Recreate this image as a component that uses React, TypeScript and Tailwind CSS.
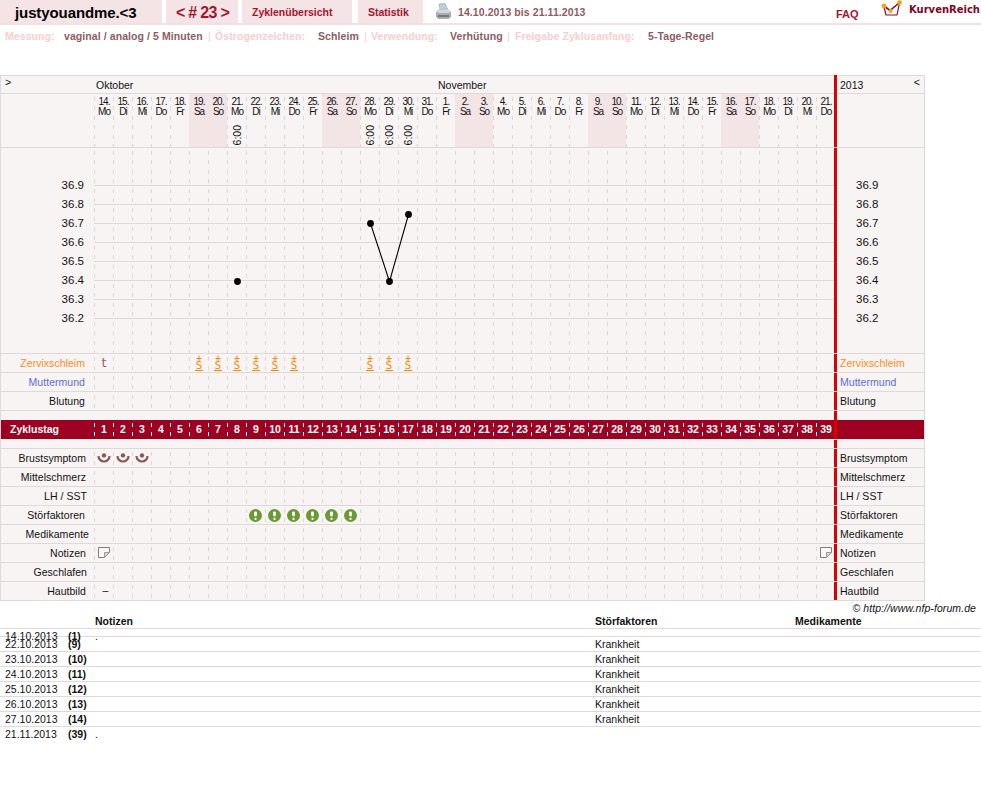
const days: [number, string][] = [
  [14, "Mo"], [15, "Di"], [16, "Mi"], [17, "Do"], [18, "Fr"], [19, "Sa"], [20, "So"],
  [21, "Mo"], [22, "Di"], [23, "Mi"], [24, "Do"], [25, "Fr"], [26, "Sa"], [27, "So"],
  [28, "Mo"], [29, "Di"], [30, "Mi"], [31, "Do"], [1, "Fr"], [2, "Sa"], [3, "So"],
  [4, "Mo"], [5, "Di"], [6, "Mi"], [7, "Do"], [8, "Fr"], [9, "Sa"], [10, "So"],
  [11, "Mo"], [12, "Di"], [13, "Mi"], [14, "Do"], [15, "Fr"], [16, "Sa"], [17, "So"],
  [18, "Mo"], [19, "Di"], [20, "Mi"], [21, "Do"],
];

const dash =
  "bg-[linear-gradient(to_bottom,transparent_3px,#dcd8d8_3px,#dcd8d8_7px,transparent_7px,transparent_12px,#dcd8d8_12px,#dcd8d8_16px,transparent_16px)] bg-[length:1px_19px] bg-repeat-y";
const dashWhite =
  "bg-[linear-gradient(to_bottom,transparent_3px,#ffffff_3px,#ffffff_7px,transparent_7px,transparent_12px,#ffffff_12px,#ffffff_16px,transparent_16px)] bg-[length:1px_19px] bg-repeat-y";

const line = "border-[#dedada]";

function Cells({ render, white }: { render?: (i: number) => React.ReactNode; white?: boolean }) {
  return (
    <div className="flex w-[740px] shrink-0 overflow-hidden">
      {days.map((_, i) => (
        <div key={i} className={`w-[19px] shrink-0 flex items-center justify-center pl-px ${white ? dashWhite : dash}`}>
          {render?.(i)}
        </div>
      ))}
    </div>
  );
}

function Row({
  label,
  pr = 9,
  color = "text-[#111]",
  render,
}: {
  label: string;
  pr?: number;
  color?: string;
  render?: (i: number) => React.ReactNode;
}) {
  return (
    <div className={`flex h-[19px] border-t ${line}`}>
      <div className={`w-[94px] shrink-0 border-l ${line} text-right leading-[18px] tracking-[0.04px] ${color}`} style={{ paddingRight: pr }}>
        {label}
      </div>
      <Cells render={render} />
      <div className="w-[3px] shrink-0 bg-[#dd0000]" />
      <div className={`w-[88px] shrink-0 border-r ${line} pl-[3px] leading-[18px] tracking-[0.04px] ${color}`}>{label}</div>
    </div>
  );
}

function Schleim() {
  return (
    <div className="flex flex-col items-center font-['DejaVu_Sans',sans-serif] text-[#ff8800]">
      <span className="h-[6px] text-[8px] font-bold leading-[6px]">+</span>
      <span className="w-[8px] border-b border-[#ff8800] text-center text-[10px] leading-[8px]">S</span>
    </div>
  );
}

function Brust() {
  return (
    <svg width="14" height="12" viewBox="0 0 14 12">
      <circle cx="7" cy="3.4" r="2.2" fill="#8a5a5a" />
      <path d="M1.5 4 A5.5 5.5 0 0 0 12.5 4" fill="none" stroke="#8a5a5a" strokeWidth="2.2" />
    </svg>
  );
}

function Stoer() {
  return (
    <svg width="13" height="13" viewBox="0 0 13 13" className="-translate-x-px">
      <circle cx="6.5" cy="6.5" r="6.5" fill="#6b9a34" />
      <rect x="5" y="2.5" width="3" height="5" rx="1.4" fill="#fff" />
      <rect x="5.5" y="8.8" width="2" height="2" fill="#fff" />
    </svg>
  );
}

function Note() {
  return (
    <svg width="12" height="11" viewBox="0 0 12 11" className="-translate-y-px">
      <path d="M0.5 0.5 H11.5 V5.5 L6.5 10.5 H0.5 Z" fill="#fbf8f8" stroke="#807c7c" />
      <path d="M11.5 5.5 H6.5 V10.5 Z" fill="#d8d4d4" stroke="#999" />
    </svg>
  );
}

function Printer() {
  return (
    <svg width="17" height="17" viewBox="0 0 17 17">
      <path d="M4 1 L10 0.5 L12.5 6 L5 6.5 Z" fill="#bcd0dc" stroke="#8ea3ae" strokeWidth="0.6" />
      <path d="M1 9 L3.5 6.5 H13.5 L16 9 V14 L13.5 16 H3.5 L1 14 Z" fill="#a9adb1" />
      <path d="M1 9 L3.5 6.5 H13.5 L16 9 L13 10 H4 Z" fill="#d4d7da" />
      <rect x="3" y="12" width="11" height="2" fill="#75797d" />
    </svg>
  );
}

function Logo() {
  return (
    <svg width="22" height="19" viewBox="0 0 22 19">
      <path d="M3 7 L5 15 H16 L18.5 3" fill="#fff" stroke="#8b0b2a" strokeWidth="1.2" />
      <path d="M3 6 L9 10.5 L18 3" fill="none" stroke="#8b0b2a" strokeWidth="1.6" />
      <circle cx="3" cy="6" r="2.4" fill="#f6a21c" />
      <circle cx="9.5" cy="11" r="2" fill="#f6a21c" />
      <circle cx="18.5" cy="2.6" r="2.4" fill="#f6a21c" />
    </svg>
  );
}

const temps = ["36.9", "36.8", "36.7", "36.6", "36.5", "36.4", "36.3", "36.2"];

const notes: [string, string, string, string][] = [
  ["22.10.2013", "(9)", "", "Krankheit"],
  ["23.10.2013", "(10)", "", "Krankheit"],
  ["24.10.2013", "(11)", "", "Krankheit"],
  ["25.10.2013", "(12)", "", "Krankheit"],
  ["26.10.2013", "(13)", "", "Krankheit"],
  ["27.10.2013", "(14)", "", "Krankheit"],
];

export default function App() {
  return (
    <div className="h-[800px] w-[981px] overflow-hidden bg-white font-['Liberation_Sans',Arial,sans-serif] text-[10.5px] text-[#111]">
      {/* Top bar */}
      <div className="flex h-[25px] border-b-2 border-[#f4e0e2]">
        <div className="w-[162px] bg-[#f5e4e6] pl-[15px] text-[15px] font-bold leading-[25px] tracking-[-0.1px] text-black">justyouandme.&lt;3</div>
        <div className="ml-[4px] w-[72px] bg-[#f5e4e6] pl-px text-center text-[16px] font-bold leading-[25px] tracking-[-0.7px] text-[#a5152e]">&lt; # 23 &gt;</div>
        <div className="ml-[4px] w-[110px] bg-[#f5e4e6] pl-[10px] font-bold leading-[24px] text-[#a5152e]">Zyklenübersicht</div>
        <div className="ml-[6px] w-[65px] bg-[#f5e4e6] pl-[10px] font-bold leading-[24px] text-[#a5152e]">Statistik</div>
        <div className="ml-[12px] mt-[3px]"><Printer /></div>
        <div className="ml-[6px] font-bold leading-[24px] tracking-[0.08px] text-[#8d5c63]">14.10.2013 bis 21.11.2013</div>
        <div className="ml-auto w-[45px] pt-[7px] text-[11px] font-bold leading-[14px] text-[#a5152e]">FAQ</div>
        <div><Logo /></div>
        <div className="ml-[6px] mr-[1px] pt-[4px] font-['DejaVu_Sans',sans-serif] text-[10px] font-bold leading-[12px] text-[#7d0524]">KurvenReich</div>
      </div>

      {/* Settings line */}
      <div className="flex h-[22px] pl-[5px] pt-[4px] font-bold leading-[15px] tracking-[0.08px]">
        <span className="w-[59px] text-[#fbcdcf]">Messung:</span>
        <span className="w-[144px] text-[#8d5c63]">vaginal / analog / 5 Minuten</span>
        <span className="w-[7px] font-normal text-[#fbcdcf]">|</span>
        <span className="w-[103px] text-[#fbcdcf]">Östrogenzeichen:</span>
        <span className="w-[46px] text-[#8d5c63]">Schleim</span>
        <span className="w-[7px] font-normal text-[#fbcdcf]">|</span>
        <span className="w-[79px] text-[#fbcdcf]">Verwendung:</span>
        <span className="w-[57px] text-[#8d5c63]">Verhütung</span>
        <span className="w-[8px] font-normal text-[#fbcdcf]">|</span>
        <span className="w-[133px] text-[#fbcdcf]">Freigabe Zyklusanfang:</span>
        <span className="text-[#8d5c63]">5-Tage-Regel</span>
      </div>

      {/* Cycle chart */}
      <div className="mt-[28px] w-[925px] bg-[#f9f4f4]">
        {/* Months */}
        <div className="flex h-[18px] leading-[18px]">
          <div className={`w-[94px] shrink-0 border-l border-t ${line} pl-[4px] leading-[12px]`}>&gt;</div>
          <div className={`flex w-[740px] shrink-0 border-t ${line} pl-[2px]`}>
            <span className="w-[342px]">Oktober</span>
            <span>November</span>
          </div>
          <div className="w-[3px] shrink-0 bg-[#dd0000]" />
          <div className={`flex w-[88px] shrink-0 justify-between border-r border-t ${line} pl-[3px] pr-[4px]`}>
            <span>2013</span>
            <span className="leading-[12px]">&lt;</span>
          </div>
        </div>

        {/* Day header */}
        <div className="flex h-[54px]">
          <div className={`w-[94px] shrink-0 border-l border-t ${line}`} />
          <div className={`flex w-[740px] shrink-0 overflow-hidden border-t ${line}`}>
            {days.map(([d, w], i) => {
              const weekend = w === "Sa" || w === "So";
              const time = i === 7 || i === 14 || i === 15 || i === 16;
              return (
                <div
                  key={i}
                  className={`flex w-[19px] shrink-0 flex-col items-center pl-px pt-[3px] text-[10px] leading-[10px] tracking-[-1px] ${weekend ? "bg-[#f3e4e6]" : dash}`}
                >
                  <span>{d}.</span>
                  <span>{w}</span>
                  {time && (
                    <span className="mt-[8px] rotate-180 text-[10.5px] leading-[12px] tracking-normal [writing-mode:vertical-rl]">6:00</span>
                  )}
                </div>
              );
            })}
          </div>
          <div className="w-[3px] shrink-0 bg-[#dd0000]" />
          <div className={`w-[88px] shrink-0 border-r border-t ${line}`} />
        </div>

        {/* Temperature curve */}
        <div className={`flex h-[206px] border-t ${line}`}>
          <div className={`w-[94px] shrink-0 border-l ${line} pt-[28px] pr-[10px] text-right`}>
            {temps.map((t) => (
              <div key={t} className="h-[19px] text-[11.5px] leading-[19px]">{t}</div>
            ))}
          </div>
          <div className="relative w-[740px] shrink-0">
            <div className="absolute inset-0 flex overflow-hidden">
              {days.map((_, i) => (
                <div key={i} className={`w-[19px] shrink-0 ${dash}`} />
              ))}
            </div>
            <div className="relative pt-[37px]">
              {temps.map((t) => (
                <div key={t} className={`h-[19px] border-t ${line}`} />
              ))}
            </div>
            <svg width="740" height="205" className="absolute left-0 top-0">
              <polyline points="276.5,75.5 295.5,133.5 314.5,66.5" fill="none" stroke="#000" strokeWidth="1.1" />
              <circle cx="143.5" cy="133.5" r="3.4" fill="#000" />
              <circle cx="276.5" cy="75.5" r="3.4" fill="#000" />
              <circle cx="295.5" cy="133.5" r="3.4" fill="#000" />
              <circle cx="314.5" cy="66.5" r="3.4" fill="#000" />
            </svg>
          </div>
          <div className="w-[3px] shrink-0 bg-[#dd0000]" />
          <div className={`w-[88px] shrink-0 border-r ${line} pt-[28px] pl-[19px]`}>
            {temps.map((t) => (
              <div key={t} className="h-[19px] text-[11.5px] leading-[19px]">{t}</div>
            ))}
          </div>
        </div>

        <Row
          label="Zervixschleim"
          color="text-[#ff8c1a]"
          render={(i) =>
            i === 0 ? (
              <span className="font-['DejaVu_Sans',sans-serif] text-[13px] leading-[18px] text-[#8a6466]">t</span>
            ) : (i >= 5 && i <= 10) || (i >= 14 && i <= 16) ? (
              <Schleim />
            ) : null
          }
        />
        <Row label="Muttermund" color="text-[#5a6fd8]" />
        <Row label="Blutung" />

        <div className={`flex h-[10px] border-t ${line}`}>
          <div className={`w-[94px] shrink-0 border-l ${line}`} />
          <div className="w-[740px] shrink-0" />
          <div className="w-[3px] shrink-0 bg-[#dd0000]" />
          <div className={`w-[88px] shrink-0 border-r ${line}`} />
        </div>

        {/* Cycle days */}
        <div className="flex h-[19px] bg-[#9d0020] font-bold leading-[19px] text-white">
          <div className={`w-[94px] shrink-0 border-l ${line} pl-[9px]`}>Zyklustag</div>
          <Cells white render={(i) => <span>{i + 1}</span>} />
          <div className="w-[3px] shrink-0 bg-[#dd0000]" />
          <div className={`w-[88px] shrink-0 border-r ${line}`} />
        </div>

        <div className="flex h-[9px]">
          <div className={`w-[94px] shrink-0 border-l ${line}`} />
          <div className="w-[740px] shrink-0" />
          <div className="mt-px w-[3px] shrink-0 bg-[#dd0000]" />
          <div className={`w-[88px] shrink-0 border-r ${line}`} />
        </div>

        <Row label="Brustsymptom" pr={8} render={(i) => (i <= 2 ? <Brust /> : null)} />
        <Row label="Mittelschmerz" pr={8} />
        <Row label="LH / SST" pr={7} />
        <Row label="Störfaktoren" pr={9} render={(i) => (i >= 8 && i <= 13 ? <Stoer /> : null)} />
        <Row label="Medikamente" pr={5} />
        <Row label="Notizen" pr={8} render={(i) => (i === 0 || i === 38 ? <Note /> : null)} />
        <Row label="Geschlafen" pr={7} />
        <Row label="Hautbild" pr={8} render={(i) => (i === 0 ? <span className="pl-[3px]">–</span> : null)} />
        <div className={`border-t ${line}`} />
      </div>

      {/* Note list */}
      <div className="h-[14px] pr-[5px] text-right italic leading-[14px] tracking-[0.08px]">© http://www.nfp-forum.de</div>
      <div className={`flex h-[14px] border-b ${line} font-bold leading-[12px]`}>
        <div className="w-[95px]" />
        <div className="w-[500px]">Notizen</div>
        <div className="w-[200px]">Störfaktoren</div>
        <div>Medikamente</div>
      </div>
      <div className={`flex h-[8px] border-b ${line} leading-[14px]`}>
        <div className="w-[68px] pl-[5px]">14.10.2013</div>
        <div className="w-[27px] font-bold">(1)</div>
        <div>.</div>
      </div>
      {notes.map(([date, nr, text, stoer]) => (
        <div key={date} className={`flex h-[15px] border-b ${line} leading-[14px]`}>
          <div className="w-[68px] pl-[5px]">{date}</div>
          <div className="w-[27px] font-bold">{nr}</div>
          <div className="w-[500px]">{text}</div>
          <div>{stoer}</div>
        </div>
      ))}
      <div className="flex h-[15px] leading-[14px]">
        <div className="w-[68px] pl-[5px]">21.11.2013</div>
        <div className="w-[27px] font-bold">(39)</div>
        <div>.</div>
      </div>
    </div>
  );
}
